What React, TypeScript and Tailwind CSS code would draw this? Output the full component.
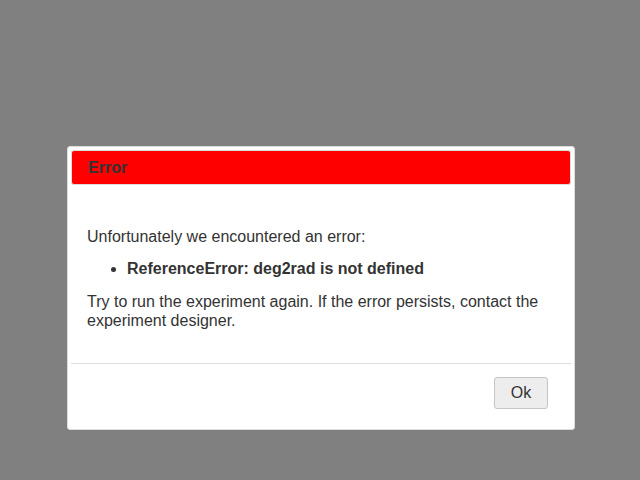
export default function App() {
  return (
    <div className="min-h-screen bg-[#808080] pt-[146px] font-['Liberation_Sans',Arial,sans-serif] text-[16px] text-[#333333]">
      <div className="ml-[67px] w-[508px] rounded-[3px] border border-[#dddddd] bg-white p-[3px]">
        {/* title bar */}
        <div className="flex h-[35px] items-center rounded-[3px] border border-[#dddddd] bg-[#ff0000] px-4">
          <span className="font-bold leading-[19px]">Error</span>
        </div>

        {/* content */}
        <div className="px-4 pt-[42px] pb-[33px] leading-[19px]">
          <p>Unfortunately we encountered an error:</p>
          <ul className="mt-[13px] list-disc pl-10">
            <li className="font-bold">ReferenceError: deg2rad is not defined</li>
          </ul>
          <p className="mt-[14px]">
            Try to run the experiment again. If the error persists, contact the experiment designer.
          </p>
        </div>

        {/* button pane */}
        <div className="flex justify-end border-t border-[#dddddd] pt-[13px] pr-[23px] pb-[17px]">
          <button className="h-[32px] w-[54px] rounded-[3px] border border-[#c5c5c5] bg-[#ededed] text-[16px] text-[#333333]">
            Ok
          </button>
        </div>
      </div>
    </div>
  );
}
